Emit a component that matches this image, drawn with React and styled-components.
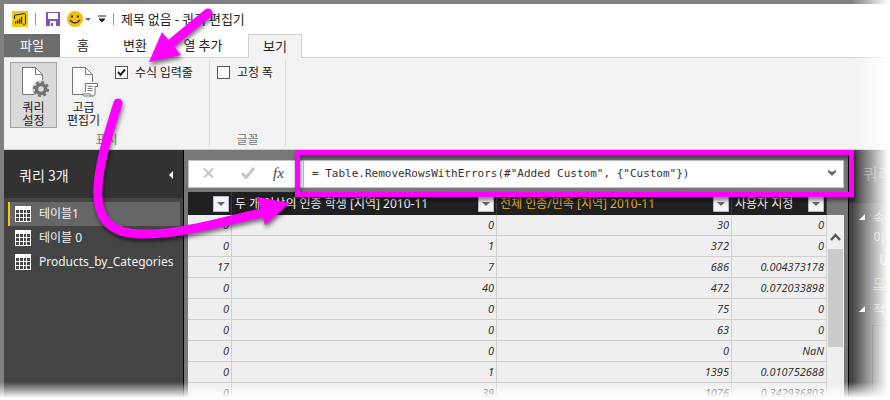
import React from 'react';
import styled, { createGlobalStyle, css } from 'styled-components';

const sans = '"Noto Sans", "Noto Sans CJK KR", sans-serif';
const korean = '"Noto Sans CJK KR", "Noto Sans", sans-serif';

const GlobalStyle = createGlobalStyle`
  * { box-sizing: border-box; }
  html, body, #root { height: 100%; }
  body { margin: 0; background: #fff; overflow: hidden; }
  button, input, textarea, label { font: inherit; color: inherit; }
  button { border: 0; padding: 0; background: none; display: flex; align-items: center; }
  svg { display: block; flex: none; }
`;

const Stage = styled.div`
  position: relative;
  height: 100vh;
  padding: 3px 0 0 3px;
  overflow: hidden;
  background: #808080;
  font: 12px/16px ${korean};
  color: #222;
`;

const Window = styled.div`
  height: 100%;
  border-left: 1px solid #5b84c9;
  border-top: 1px solid #5b84c9;
  background: #fff;
  display: flex;
  flex-direction: column;
`;

const TitleBar = styled.header`
  height: 30px;
  flex: none;
  display: flex;
  align-items: center;
  padding: 0 8px;
`;

const Divider = styled.span`
  width: 1px;
  height: 12px;
  background: #9a9a9a;
  margin: 0 ${p => p.$after}px 0 ${p => p.$before}px;
`;

const QuickButton = styled.button`
  gap: 2px;
  margin-right: ${p => p.$gap}px;
`;

const Title = styled.h1`
  margin: 0;
  font-size: 13px;
  font-weight: 400;
`;

const Tabs = styled.nav`
  height: 24px;
  flex: none;
  display: flex;
  border-bottom: 1px solid #d2d2d2;
`;

const Tab = styled.button`
  height: 24px;
  padding-bottom: 2px;
  width: ${p => p.$width}px;
  justify-content: center;
  font-size: 13px;
  ${p => p.$kind === 'file' && css`background: #6d6d6d; color: #fff; height: 23px;`}
  ${p => p.$kind === 'active' && css`
    background: #f3f3f3;
    border: 1px solid #d2d2d2;
    border-bottom: 0;
    margin-left: 6px;
  `}
`;

const Ribbon = styled.section`
  height: 92px;
  flex: none;
  display: flex;
  background: #f3f3f3;
  border-bottom: 1px solid #d0d0d0;
  padding-top: 2px;
`;

const Group = styled.div`
  display: flex;
  flex-direction: column;
  justify-content: space-between;
  padding: 2px 6px 0;
  width: ${p => p.$width}px;
  margin-bottom: 3px;
  border-right: 1px solid #dcdcdc;
`;

const GroupTools = styled.div`
  display: flex;
  align-items: flex-start;
`;

const GroupName = styled.div`
  text-align: center;
  color: #777;
  line-height: 14px;
`;

const BigButton = styled.button`
  width: 47px;
  height: 66px;
  margin-right: 3px;
  padding-top: 4px;
  flex-direction: column;
  line-height: 13px;
  gap: 3px;
  border: 1px solid transparent;
  ${p => p.$pressed && css`background: #dadada; border-color: #a3a3a3;`}
`;

const Check = styled.label`
  display: flex;
  align-items: center;
  gap: 7px;
  padding: 2px 0 0 ${p => p.$indent}px;
  white-space: nowrap;
  input {
    appearance: none;
    margin: 0;
    width: 13px;
    height: 13px;
    border: 1px solid #555;
    background: #fff;
  }
  input:checked {
    background: #fff url("data:image/svg+xml,%3Csvg xmlns='http://www.w3.org/2000/svg' viewBox='0 0 11 11'%3E%3Cpath d='M2 5l2.5 3L9 2.5' fill='none' stroke='%23222' stroke-width='2'/%3E%3C/svg%3E");
  }
`;

const Body = styled.main`
  flex: 1;
  min-height: 0;
  display: flex;
  background: #777;
`;

const Side = styled.aside`
  width: 180px;
  flex: none;
  background: #444;
  border-right: 1px solid #000;
  color: #f2f2f2;
`;

const SideHead = styled.div`
  height: 48px;
  display: flex;
  align-items: center;
  justify-content: space-between;
  padding: 2px 10px 0 15px;
  background: #323232;
  h2 { margin: 0; font-size: 14px; font-weight: 400; }
`;

const QueryList = styled.ul`
  list-style: none;
  margin: 4px 3px 0 4px;
  padding: 0;
`;

const Query = styled.button`
  width: 100%;
  height: 24px;
  padding-left: 5px;
  gap: 8px;
  font-family: ${sans};
  border-left: 2px solid transparent;
  ${p => p.$active && css`background: #666; border-color: #f2c811;`}
`;

const Center = styled.section`
  flex: 1;
  min-width: 0;
  padding: 10px 4px 0 4px;
  display: flex;
  flex-direction: column;
`;

const FormulaBar = styled.div`
  height: 28px;
  flex: none;
  display: flex;
  border: 1px solid #c4c4c4;
  background: #fff;
`;

const FormulaTools = styled.div`
  display: grid;
  grid-template-columns: 38px 32px auto;
  width: 114px;
  padding: 0 0 2px 14px;
`;

const FormulaInput = styled.input`
  flex: 1;
  min-width: 0;
  border: 0;
  border-left: 1px solid #c4c4c4;
  outline: 0;
  background: #fff;
  padding: 0 8px;
  && { font: 11px/16px "DejaVu Sans Mono", monospace; color: #333; }
`;

const ExpandButton = styled.button`
  padding: 0 7px 3px;
`;

const Fx = styled.span`
  font: italic 15px/16px "Liberation Serif", serif;
  color: #444;
`;

const GridArea = styled.div`
  display: flex;
  flex: 1;
  min-height: 0;
  overflow: hidden;
  margin-top: 4px;
`;

const Grid = styled.table`
  flex: 1;
  border-collapse: separate;
  border-spacing: 0;
  table-layout: fixed;
  align-self: flex-start;
  font-family: ${sans};
  th {
    height: 23px;
    padding: 0;
    background: #202020;
    color: #f4f4f4;
    font-weight: 400;
    border-right: 1px solid #3c3c3c;
  }
  td {
    height: 21px;
    padding: 0 2px 0 0;
    line-height: 18px;
    background: #efefef;
    border-right: 1px solid #d0d0d0;
    border-bottom: 1px solid #d0d0d0;
    color: #333;
    text-align: right;
    font-style: italic;
    font-size: 11px;
  }
`;

const Col = styled.col`
  width: ${p => p.$width};
`;

const HeadCell = styled.div`
  display: flex;
  align-items: center;
  justify-content: space-between;
  padding: 0 2px 0 3px;
  white-space: nowrap;
  line-height: 20px;
  color: ${p => (p.$accent ? '#e0b02c' : 'inherit')};
`;

const Filter = styled.button`
  width: 16px;
  height: 16px;
  flex: none;
  justify-content: center;
  background: #f3f4f8;
  border: 1px solid #b9bcc6;
`;

const Scroll = styled.div`
  width: 17px;
  flex: none;
  margin-top: 23px;
  padding: 18px 1px 0;
  background: #efefef;
`;

const ScrollArrow = styled.button`
  width: 100%;
  justify-content: center;
`;

const Thumb = styled.div`
  margin-top: 8px;
  height: 98px;
  background: #cbcbcb;
`;

const Settings = styled.aside`
  width: 42px;
  flex: none;
  overflow: hidden;
  white-space: nowrap;
  border-left: 1px solid #000;
  background: #444;
  color: #b5b5b5;
`;

const SettingsHead = styled.h2`
  margin: 0;
  height: 53px;
  padding: 11px 0 0 14px;
  background: #323232;
  font-size: 16px;
  line-height: 24px;
  font-weight: 400;
  color: #777;
`;

const Section = styled.section`
  padding: 4px 0 0 10px;
  margin-bottom: 2px;
  line-height: 20px;
  font-size: 13px;
`;

const SectionTitle = styled.div`
  display: flex;
  align-items: center;
  gap: 8px;
`;

const Field = styled.div`
  padding-left: ${p => p.$indent}px;
  line-height: ${p => p.$line}px;
`;

const AllLink = styled.a`
  display: inline-block;
  margin-left: 14px;
  color: #c79a10;
`;

const Steps = styled.div`
  margin: 6px 0 0 13px;
  height: 80px;
  border: 1px solid #222;
`;

const Fade = styled.div`
  position: absolute;
  pointer-events: none;
  ${p => p.$side === 'right'
    ? css`top: 0; bottom: 0; right: 0; width: 38px; background: linear-gradient(to right, #fff0, #fff 95%);`
    : css`left: 0; right: 0; bottom: 0; height: 18px; background: linear-gradient(to bottom, #fff0, #fff 90%);`}
`;

const Notes = styled.svg`
  position: absolute;
  left: 0;
  top: 0;
  pointer-events: none;
  filter: drop-shadow(1px 3px 2px #0008);
`;

const Caret = ({ color = '#666', w = 8, h = 4 }) => (
  <svg width={w} height={h} viewBox="0 0 8 4"><path d="M0 0h8L4 4z" fill={color} /></svg>
);

const Logo = () => (
  <svg width="16" height="16" viewBox="0 0 16 16">
    <path d="M0 0h16v16H0z" fill="#f2c811" />
    <path d="M2.5 8V4.2L12 2.5c1 0 1.5.5 1.5 1.5v8c0 1-.5 1.500-1.500 1.500L11 13" fill="none" stroke="#222" />
    <path d="M3.500 10.500v2M5.500 9.500v3M7.500 8v4.500M9.500 6v6.500" stroke="#222" strokeWidth="1.300" />
  </svg>
);

const Save = () => (
  <svg width="14" height="14" viewBox="0 0 14 14">
    <path d="M0 0h14v14H0z" fill="#8452b4" />
    <path d="M2 1h10v6H2zM4 9h6v5H4z" fill="#fff" />
    <path d="M5 11h2v3H5z" fill="#8452b4" />
  </svg>
);

const Smile = () => (
  <svg width="16" height="16" viewBox="0 0 16 16">
    <circle cx="8" cy="8" r="8" fill="#f5bc12" />
    <path d="M4 4.500h2v2H4zM10 4.500h2v2h-2z" fill="#333" />
    <path d="M3 9q5 6 10 0" fill="none" stroke="#333" strokeWidth="1.300" />
  </svg>
);

const Page = ({ children }) => (
  <svg width="28" height="30" viewBox="-1 0 28 30" overflow="visible">
    <path d="M1.500.5h13l7 7v20h-20z" fill="#fff" stroke="#777" />
    <path d="M14.500.5v7h7" fill="none" stroke="#777" />
    {children}
  </svg>
);

const GearPage = () => (
  <Page>
    <circle cx="20" cy="22" r="9" fill="#dadada" />
    <circle cx="20" cy="22" r="4.500" fill="none" stroke="#737373" strokeWidth="3.500" />
    <circle cx="20" cy="22" r="6.800" fill="none" stroke="#737373" strokeWidth="2.600" strokeDasharray="2.900 2.440" />
  </Page>
);

const ScrollPage = () => (
  <Page>
    <path d="M12 15h16v6h-3v9H11z" fill="#f3f3f3" />
    <path d="M14.500 25V16.500h12v3h-2.500V27q0 2-2 2h-9q-1.500 0-1.500-2h8q0 2 2 2" fill="#fff" stroke="#777" />
    <path d="M16.500 19.500h5M16.500 21.500h5M16.500 23.500h5" stroke="#777" />
  </Page>
);

const TableIcon = () => (
  <svg width="16" height="16" viewBox="0 0 16 16" shapeRendering="crispEdges">
    <path d="M0 0h16v16H0z" fill="#fff" />
    <path d="M1 4h3v3H1zM5 4h3v3H5zM9 4h2v3H9zM12 4h3v3h-3zM1 8h3v3H1zM5 8h3v3H5zM9 8h2v3H9zM12 8h3v3h-3zM1 12h3v3H1zM5 12h3v3H5zM9 12h2v3H9zM12 12h3v3h-3z" fill="#444" />
  </svg>
);

const Triangle = () => (
  <svg width="6" height="6" viewBox="0 0 6 6"><path d="M6 0v6H0z" fill="#fff" /></svg>
);

const rows = [
  ['0', '0', '30', '0'],
  ['0', '1', '372', '0'],
  ['17', '7', '686', '0.004373178'],
  ['0', '40', '472', '0.072033898'],
  ['0', '0', '75', '0'],
  ['0', '0', '63', '0'],
  ['0', '0', '0', 'NaN'],
  ['0', '1', '1395', '0.010752688'],
  ['0', '39', '1076', '0.342936803'],
];

const heads = [
  { text: '' },
  { text: '두 개 이상의 인종 학생 [지역] 2010-11' },
  { text: '전체 인종/민족 [지역] 2010-11', accent: true },
  { text: '사용자 지정' },
];

const tabs = [
  { text: '파일', width: 56, kind: 'file' },
  { text: '홈', width: 46 },
  { text: '변환', width: 58 },
  { text: '열 추가', width: 78 },
  { text: '보기', width: 54, kind: 'active' },
];

const queries = ['테이블1', '테이블 0', 'Products_by_Categories'];

export default function App() {
  return (
    <Stage>
      <GlobalStyle />
      <Window>
        <TitleBar>
          <Logo />
          <Divider $before={7} $after={10} />
          <QuickButton $gap={7} aria-label="저장"><Save /></QuickButton>
          <QuickButton $gap={7} aria-label="피드백"><Smile /><Caret w={6} h={3} /></QuickButton>
          <QuickButton $gap={0} aria-label="사용자 지정">
            <svg width="8" height="8" viewBox="0 0 8 8"><path d="M0 1h8M1 4h6L4 7z" fill="#222" stroke="#222" /></svg>
          </QuickButton>
          <Divider $before={7} $after={7} />
          <Title>제목 없음 - 쿼리 편집기</Title>
        </TitleBar>
        <Tabs>
          {tabs.map(t => <Tab key={t.text} $width={t.width} $kind={t.kind}>{t.text}</Tab>)}
        </Tabs>
        <Ribbon>
          <Group $width={206}>
            <GroupTools>
              <BigButton $pressed><GearPage /><span>쿼리<br />설정</span></BigButton>
              <BigButton><ScrollPage /><span>고급<br />편집기</span></BigButton>
              <Check $indent={5}><input type="checkbox" defaultChecked />수식 입력줄</Check>
            </GroupTools>
            <GroupName>표시</GroupName>
          </Group>
          <Group $width={76}>
            <GroupTools>
              <Check $indent={1}><input type="checkbox" />고정 폭</Check>
            </GroupTools>
            <GroupName>글꼴</GroupName>
          </Group>
        </Ribbon>
        <Body>
          <Side>
            <SideHead>
              <h2>쿼리 3개</h2>
              <button aria-label="접기"><svg width="4" height="8" viewBox="0 0 4 8"><path d="M4 0v8L0 4z" fill="#fff" /></svg></button>
            </SideHead>
            <QueryList>
              {queries.map((q, i) => <li key={q}><Query $active={i === 0}><TableIcon />{q}</Query></li>)}
            </QueryList>
          </Side>
          <Center>
            <FormulaBar>
              <FormulaTools>
                <button aria-label="취소"><svg width="11" height="10" viewBox="0 0 11 10"><path d="M1 .5l9 9M10 .5l-9 9" stroke="#c6c6c6" strokeWidth="2" /></svg></button>
                <button aria-label="적용"><svg width="14" height="12" viewBox="0 0 14 12"><path d="M1 6l4 4.500L13 1" fill="none" stroke="#c6c6c6" strokeWidth="3" /></svg></button>
                <button aria-label="수식"><Fx>fx</Fx></button>
              </FormulaTools>
              <FormulaInput aria-label="수식 입력줄" defaultValue={'= Table.RemoveRowsWithErrors(#"Added Custom", {"Custom"})'} />
              <ExpandButton aria-label="확장"><svg width="8" height="6" viewBox="0 0 8 6"><path d="M0 0l4 2 4-2v2L4 6 0 2z" fill="#666" /></svg></ExpandButton>
            </FormulaBar>
            <GridArea>
              <Grid>
                <colgroup><Col $width="44px" /><Col $width="265px" /><Col $width="235px" /><Col /></colgroup>
                <thead>
                  <tr>
                    {heads.map(h => (
                      <th key={h.text}>
                        <HeadCell $accent={h.accent}><span>{h.text}</span><Filter aria-label="필터"><Caret /></Filter></HeadCell>
                      </th>
                    ))}
                  </tr>
                </thead>
                <tbody>
                  {rows.map((r, i) => <tr key={i}>{r.map((c, j) => <td key={j}>{c}</td>)}</tr>)}
                </tbody>
              </Grid>
              <Scroll>
                <ScrollArrow aria-label="위로">
                  <svg width="11" height="8" viewBox="0 0 11 8"><path d="M1 7l4.500-5L10 7" fill="none" stroke="#555" strokeWidth="2.500" /></svg>
                </ScrollArrow>
                <Thumb />
              </Scroll>
            </GridArea>
          </Center>
          <Settings>
            <SettingsHead>쿼리 설정</SettingsHead>
            <Section>
              <SectionTitle><Triangle />속성</SectionTitle>
              <Field $indent={14} $line={20}>이름</Field>
              <Field $indent={20} $line={26}>US</Field>
              <AllLink href="#all">모든 속성</AllLink>
            </Section>
            <Section>
              <SectionTitle><Triangle />적용된 단계</SectionTitle>
              <Steps />
            </Section>
          </Settings>
        </Body>
      </Window>
      <Fade $side="right" />
      <Fade $side="bottom" />
      <Notes width="890" height="400" viewBox="0 0 890 400" fill="none" stroke="#f0f">
        <path d="M297.500 152.500h554v42h-554z" strokeWidth="5" />
        <path d="M208 13L168 46" strokeWidth="9" strokeLinecap="round" />
        <path d="M149 62l13-30 19 23z" fill="#f0f" stroke="none" />
        <path d="M118 103C95 175 80 233 140 234C180 235 220 222 262 213" strokeWidth="9" strokeLinecap="round" />
        <path d="M290 203l-33-6 8 28z" fill="#f0f" stroke="none" />
      </Notes>
    </Stage>
  );
}
